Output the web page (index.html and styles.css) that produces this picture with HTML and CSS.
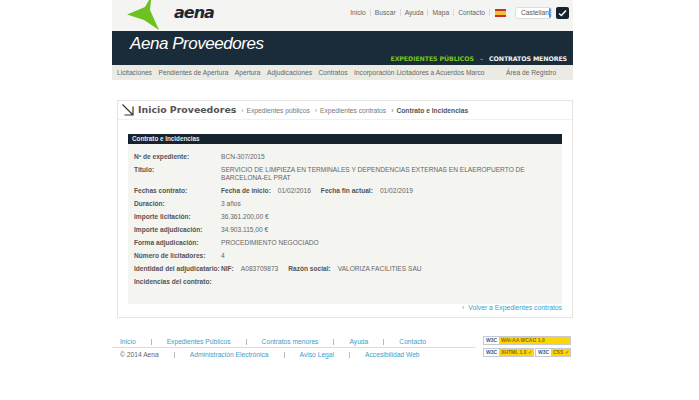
FILE: index.html
```html
<!DOCTYPE html>
<html lang="es">
<head>
<meta charset="utf-8">
<title>Aena Proveedores</title>
<link rel="stylesheet" href="styles.css">
</head>
<body>
<div class="page">
  <header class="top">
    <div class="logo">
      <svg class="logo-mark" width="36" height="31" viewBox="0 0 36 31"><path fill="#6cc21e" d="M0 14.500 L18 7 L22 0 L24 0 L23 10 L32 30 L17 20 Z"/></svg>
      <span class="logo-text">aena</span>
    </div>
    <nav class="util">
      <a>Inicio</a><i></i><a>Buscar</a><i></i><a>Ayuda</a><i></i><a>Mapa</a><i></i><a>Contacto</a><i></i>
      <svg class="flag" width="11" height="8" viewBox="0 0 11 8"><rect width="11" height="8" fill="#c8302a"/><rect y="2" width="11" height="4" fill="#f2c230"/></svg>
      <div class="lang"><span>Castellan</span><b><svg width="7" height="11" viewBox="0 0 7 11"><path d="M1.500 4.500 L3.500 2.500 L5.500 4.500 M1.500 6.500 L3.500 8.500 L5.500 6.500" fill="none" stroke="#fff" stroke-width="1.100"/></svg></b></div>
      <div class="go"><svg width="9" height="8" viewBox="0 0 9 8"><path d="M1 4.500 L3.400 6.500 L8 1.500" fill="none" stroke="#fff" stroke-width="1.500"/></svg></div>
    </nav>
  </header>
  <section class="band">
    <h1>Aena Proveedores</h1>
    <div class="band-links"><span class="green">EXPEDIENTES PÚBLICOS</span><span class="green dash">–</span><span>CONTRATOS MENORES</span></div>
  </section>
  <nav class="menu">
    <a>Licitaciones</a><a>Pendientes de Apertura</a><a>Apertura</a><a>Adjudicaciones</a><a>Contratos</a><a>Incorporación Licitadores a Acuerdos Marco</a><a class="reg">Área de Registro</a>
  </nav>
  <main class="card">
    <div class="crumbs">
      <svg class="arrow" width="14" height="14" viewBox="0 0 14 14"><path d="M1.500 1.500 L11.500 11.500 M12 3.500 V12 H3.500" fill="none" stroke="#333" stroke-width="1.200"/></svg>
      <h2>Inicio Proveedores</h2>
      <span class="crumb">Expedientes públicos</span>
      <span class="crumb">Expedientes contratos</span>
      <span class="crumb current">Contrato e Incidencias</span>
    </div>
    <div class="panel-title">Contrato e Incidencias</div>
    <dl class="panel">
      <dt>Nº de expediente:</dt><dd>BCN-307/2015</dd>
      <dt>Título:</dt><dd>SERVICIO DE LIMPIEZA EN TERMINALES Y DEPENDENCIAS EXTERNAS EN ELAEROPUERTO DE BARCELONA-EL PRAT</dd>
      <dt>Fechas contrato:</dt><dd><b>Fecha de inicio:</b>01/02/2016<b class="next">Fecha fin actual:</b>01/02/2019</dd>
      <dt>Duración:</dt><dd>3 años</dd>
      <dt>Importe licitación:</dt><dd>36.361.200,00 €</dd>
      <dt>Importe adjudicación:</dt><dd>34.903.115,00 €</dd>
      <dt>Forma adjudicación:</dt><dd>PROCEDIMIENTO NEGOCIADO</dd>
      <dt>Número de licitadores:</dt><dd>4</dd>
      <dt>Identidad del adjudicatario:</dt><dd><b>NIF:</b>A083709873<b class="next">Razón social:</b>VALORIZA FACILITIES SAU</dd>
      <dt>Incidencias del contrato:</dt><dd></dd>
    </dl>
    <a class="back">Volver a Expedientes contratos</a>
  </main>
  <footer class="foot">
    <div class="foot-links">
      <div class="foot-row first"><a>Inicio</a><i></i><a>Expedientes Públicos</a><i></i><a>Contratos menores</a><i></i><a>Ayuda</a><i></i><a>Contacto</a></div>
      <div class="foot-row second"><span>© 2014 Aena</span><i></i><a>Administración Electrónica</a><i></i><a>Aviso Legal</a><i></i><a>Accesibilidad Web</a></div>
    </div>
    <div class="badges">
      <div class="badge wide"><span class="w3">W3C</span><span class="tag">WAI-AA WCAG 1.0</span></div>
      <div class="badge-row">
        <div class="badge mid"><span class="w3">W3C</span><span class="tag">XHTML 1.0 ✓</span></div>
        <div class="badge small"><span class="w3">W3C</span><span class="tag">CSS ✓</span></div>
      </div>
    </div>
  </footer>
</div>
</body>
</html>
```
FILE: styles.css
```css
* { box-sizing: border-box; }
html, body { margin: 0; background: #fff; }
body { font-family: "Liberation Sans", Arial, sans-serif; font-size: 6.7px; color: #555; }
.page { width: 461px; margin-left: 112px; }

.top { height: 31px; background: #f4f4f2; display: flex; justify-content: space-between; }
.logo { display: flex; position: relative; padding-left: 15px; }
.logo-mark { display: block; }
.logo-text { font-size: 16px; font-weight: bold; font-style: italic; color: #1c2a36; margin: 3px 0 0 11px; line-height: 20px; font-family: "DejaVu Sans", sans-serif; letter-spacing: -1px; }
.util { display: flex; align-items: center; height: 25px; padding-right: 4px; color: #666; }
.util i { width: 1px; height: 7px; background: #d8d8d8; margin: 0 4px; }
.flag { margin-left: 1px; }
.lang { width: 37px; height: 12px; margin-left: 9px; background: #fff; border: 1px solid #ddd; border-radius: 3px; display: flex; justify-content: space-between; padding-left: 5px; line-height: 10px; overflow: hidden; color: #555; }
.lang b { width: 8px; background: #4a90e2; display: flex; align-items: center; justify-content: center; }
.lang svg { display: block; width: 6px; height: 9px; }
.go { width: 13px; height: 12px; margin-left: 4px; background: #16222e; border-radius: 2px; display: flex; align-items: center; justify-content: center; }

.band { height: 34px; background: #1a2b3a; display: flex; justify-content: space-between; position: relative; }
.band h1 { margin: 3px 0 0 18px; font-size: 17px; line-height: 20px; font-weight: normal; font-style: italic; color: #fff; letter-spacing: -0.45px; }
.band-links { align-self: flex-end; padding: 0 6px 2px 0; display: flex; font-family: "DejaVu Sans", sans-serif; font-size: 6.3px; font-weight: bold; line-height: 8px; color: #f2f2f2; letter-spacing: -0.12px; }
.green { color: #7cc520; }
.dash { margin: 0 6px; }

.menu { height: 15px; background: #ecebe3; display: flex; align-items: center; padding-left: 5px; color: #666; }
.menu a { margin-right: 6.500px; white-space: nowrap; }
.menu .reg { margin-left: 15px; }

.card { margin: 20px 0 0 5px; width: 456px; height: 218px; border: 1px solid #e4e4e4; position: relative; padding: 0 10px; }
.crumbs { height: 19px; margin: 0 -10px 14px; padding-left: 3px; display: flex; align-items: center; border-bottom: 1px solid #f0f0f0; color: #777; }
.arrow { margin-right: 3px; }
.crumbs h2 { margin: 0 5px 0 0; font-family: "DejaVu Sans", sans-serif; font-size: 9.400px; line-height: 14px; font-weight: bold; color: #555; white-space: nowrap; }
.crumb { margin-right: 5px; white-space: nowrap; }
.crumb::before { content: "›"; margin-right: 3px; color: #999; }
.current { font-weight: bold; color: #555; }

.panel-title { height: 10px; background: #16232f; color: #e9e9e9; font-weight: bold; font-size: 6.300px; line-height: 10px; padding-left: 4px; }
.panel { margin: 0; height: 160px; background: #f4f4f1; padding: 9px 6px 0; display: grid; grid-template-columns: 87px 1fr; row-gap: 5px; align-content: start; line-height: 8px; }
.panel dt { font-weight: bold; color: #555; font-size: 6.600px; }
.panel dd { margin: 0; color: #666; font-size: 6.600px; }
.panel dd b { color: #555; margin-right: 7px; }
.panel dd .next { margin-left: 10px; }

.back { position: absolute; right: 10px; bottom: 5px; color: #3aa0cc; font-size: 6.800px; line-height: 8px; }
.back::before { content: "›"; margin-right: 4px; }

.foot { margin-top: 18px; display: flex; position: relative; }
.foot-links { width: 364px; padding-left: 0; }
.foot-row { display: flex; align-items: center; height: 11px; color: #3aa0cc; }
.foot-row i { width: 1px; height: 6px; background: #bbb; }
.first { padding-left: 8px; border-bottom: 1px solid #ddd; height: 12px; }
.first i { margin: 0 15px; }
.second { padding: 0 0 0 8px; margin-top: 1px; }
.second span { color: #666; }
.second i { margin: 0 15px; }
.badges { margin: 0 0 0 7px; display: flex; flex-direction: column; gap: 3px; }
.badge-row { display: flex; gap: 1px; }
.badge { height: 9px; display: flex; background: #ffd800; border: 1px solid #c8c8d0; font-size: 5px; line-height: 7px; font-weight: bold; overflow: hidden; }
.wide { width: 88px; }
.mid { width: 51px; }
.small { width: 36px; }
.w3 { background: #fff; color: #315a8c; padding: 0 2px; width: 15px; white-space: nowrap; }
.tag { padding-left: 2px; color: #8a6d1c; white-space: nowrap; }
```
